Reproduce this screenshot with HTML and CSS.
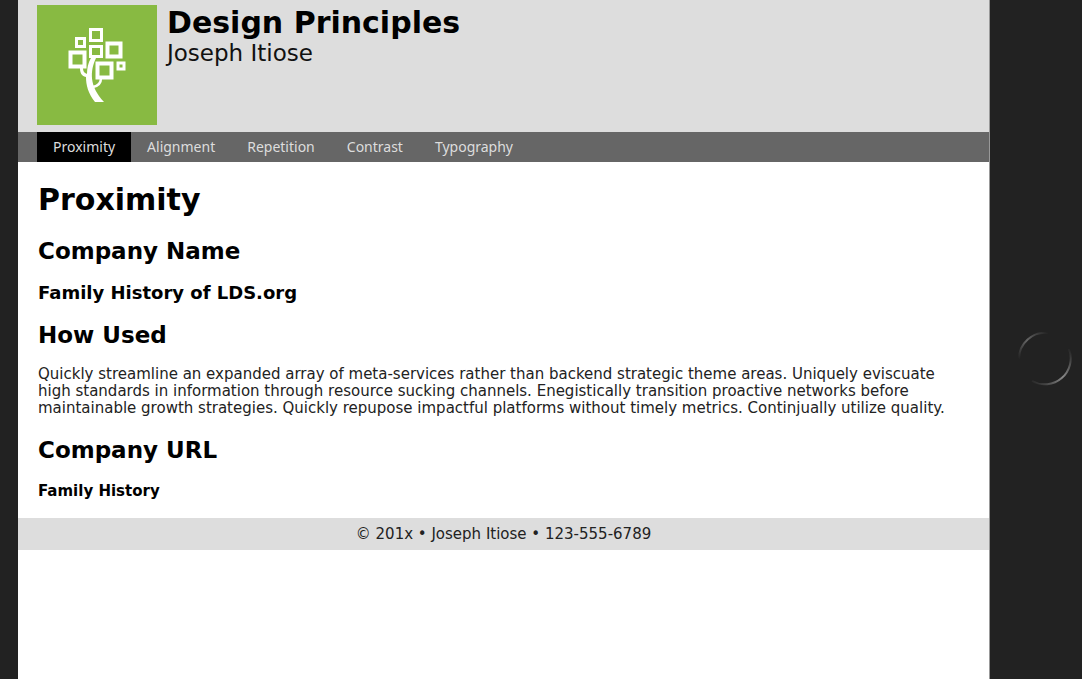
FILE: index.html
```html
<!DOCTYPE html>
<html lang="en">
<head>
<meta charset="utf-8">
<title>Design Principles</title>
<link rel="stylesheet" href="styles.css">
</head>
<body>
<div class="device">
  <div class="screen">
    <header class="banner">
      <svg class="logo" viewBox="0 0 120 120" role="img" aria-label="Family tree">
        <rect width="120" height="120" fill="#88ba42"/>
        <g fill="none" stroke="#fff" stroke-width="3">
          <rect x="53.500" y="24.500" width="11" height="11"/>
          <rect x="39.500" y="33.500" width="8" height="8"/>
          <rect x="53.500" y="41.500" width="11" height="10"/>
          <rect x="70.500" y="38.500" width="13" height="13" stroke-width="4"/>
          <rect x="33.500" y="47.500" width="14" height="14" stroke-width="4"/>
          <rect x="60.500" y="58.500" width="14" height="14" stroke-width="4"/>
          <rect x="81" y="58" width="6" height="6"/>
        </g>
        <path fill="#fff" d="M54 53H59C53 66 52 81 67 97H58C51 88 49 80 49 72C44 71 43 67 43 63H46C46 67 48 68 50 69C50 63 51 58 54 53Z"/>
        <path fill="none" stroke="#fff" stroke-width="2.500" d="M56 82C61 81 64 78 64 73"/>
      </svg>
      <div class="titles">
        <h1 class="site-title">Design Principles</h1>
        <p class="author">Joseph Itiose</p>
      </div>
    </header>
    <nav class="menu">
      <a class="menu-link active" href="#proximity" aria-current="page">Proximity</a>
      <a class="menu-link" href="#alignment">Alignment</a>
      <a class="menu-link" href="#repetition">Repetition</a>
      <a class="menu-link" href="#contrast">Contrast</a>
      <a class="menu-link" href="#typography">Typography</a>
    </nav>
    <main class="content" id="proximity">
      <h1 class="page-title">Proximity</h1>
      <h2 class="heading">Company Name</h2>
      <h3 class="subheading">Family History of LDS.org</h3>
      <h2 class="heading">How Used</h2>
      <p class="text">Quickly streamline an expanded array of meta-services rather than backend strategic theme areas. Uniquely eviscuate high standards in information through resource sucking channels. Enegistically transition proactive networks before maintainable growth strategies. Quickly repupose impactful platforms without timely metrics. Continjually utilize quality.</p>
      <h2 class="heading">Company URL</h2>
      <a class="company-link" href="#family-history">Family History</a>
    </main>
    <footer class="footer">© 201x • Joseph Itiose • 123-555-6789</footer>
  </div>
  <div class="bezel">
    <svg class="home" viewBox="0 0 54 54" aria-hidden="true">
      <defs>
        <linearGradient id="dim" x1="0" y1="1" x2="1" y2="0">
          <stop offset="0" stop-color="#222"/><stop offset=".5" stop-color="#666"/><stop offset="1" stop-color="#222"/>
        </linearGradient>
        <linearGradient id="lit" x1="0" y1="1" x2="1" y2="0">
          <stop offset="0" stop-color="#222"/><stop offset=".5" stop-color="#888"/><stop offset="1" stop-color="#222"/>
        </linearGradient>
      </defs>
      <path d="M1 27A26 26 0 0 1 30 1" fill="none" stroke="url(#dim)" stroke-width="2"/>
      <path d="M14 49A26 26 0 0 0 51 17" fill="none" stroke="url(#lit)" stroke-width="2"/>
    </svg>
  </div>
</div>
</body>
</html>
```
FILE: styles.css
```css
* { box-sizing: border-box; }
body {
  margin: 0;
  color: #000;
  font-family: Verdana, "DejaVu Sans", sans-serif;
  font-size: 15px;
  line-height: 17px;
}
.device {
  display: flex;
  min-height: 100vh;
  padding-left: 18px;
  background: #222;
}
.screen {
  flex: 1;
  background: #fff;
  border-right: 1px solid #999;
}
.bezel {
  display: flex;
  align-items: center;
  flex: 0 0 92px;
  padding: 38px 0 0 28px;
}
.home { width: 54px; height: 54px; }
.banner {
  display: flex;
  gap: 10px;
  padding: 5px 19px 7px;
  background: #ddd;
}
.logo { width: 120px; height: 120px; }
.site-title {
  margin: 0;
  font-size: 30px;
  line-height: 35px;
}
.author {
  margin: 0;
  color: #111;
  font-size: 23px;
  line-height: 26px;
}
.menu {
  display: flex;
  padding: 0 19px;
  background: #666;
}
.menu-link {
  padding: 0 16px;
  color: #ddd;
  font-family: "Noto Sans", sans-serif;
  font-size: 14px;
  line-height: 30px;
  text-decoration: none;
}
.active { background: #000; }
.content { padding: 20px 20px 17px; }
.page-title {
  margin: 0 0 20px;
  font-size: 30px;
  line-height: 36px;
}
.heading {
  margin: 18px 0;
  font-size: 23px;
  line-height: 26px;
}
.subheading {
  margin: 0;
  font-size: 18px;
  line-height: 22px;
}
.text {
  margin: 0 0 20px;
  color: #222;
}
.company-link {
  display: block;
  color: #000;
  font-weight: bold;
  line-height: 20px;
  text-decoration: none;
}
.footer {
  padding: 8px 19px 7px;
  background: #ddd;
  color: #222;
  text-align: center;
}
```
